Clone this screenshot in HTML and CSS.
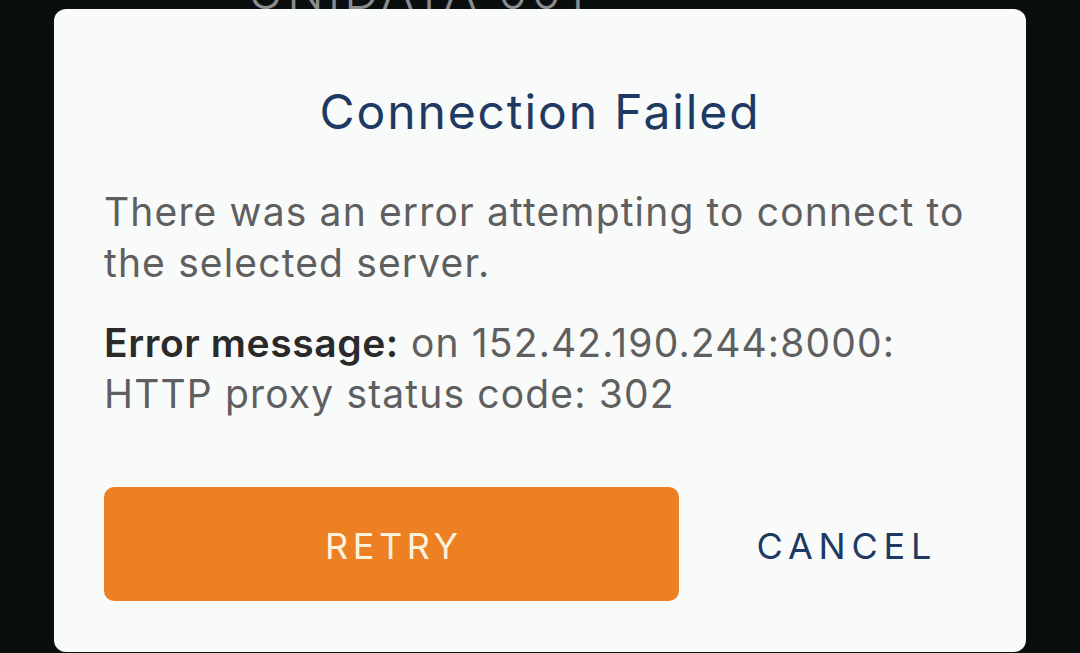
FILE: index.html
```html
<!DOCTYPE html>
<html>
<head>
<meta charset="utf-8">
<link rel="stylesheet" href="styles.css">
</head>
<body>
<div class="screen">
  <div class="bg-title">UNIDATA 001</div>
</div>
<div class="dialog">
  <h1 class="title">Connection Failed</h1>
  <p class="msg">There was an error attempting to connect to the selected server.</p>
  <p class="msg err"><b>Error message:</b> on 152.42.190.244:8000: HTTP proxy status code: 302</p>
  <div class="actions">
    <button class="btn retry">RETRY</button>
    <button class="btn cancel">CANCEL</button>
  </div>
</div>
</body>
</html>
```
FILE: styles.css
```css
html, body {
  margin: 0;
  padding: 0;
  width: 1080px;
  height: 653px;
  overflow: hidden;
  background: #0b0e0f;
  font-family: "Inter", "Noto Sans", sans-serif;
}
.screen {
  position: relative;
  height: 653px;
}
.bg-title {
  padding-left: 248px;
  margin-top: -38px;
  font-size: 48px;
  font-weight: 300;
  letter-spacing: 4px;
  color: #8a8d8f;
}
.dialog {
  position: absolute;
  left: 54px;
  top: 9px;
  width: 972px;
  height: 643px;
  box-sizing: border-box;
  background: #f9fafa;
  border-radius: 12px;
  padding: 75px 17px 0 50px;
}
.title {
  margin: 0 0 46px;
  padding-right: 33px;
  text-align: center;
  font-size: 48px;
  font-weight: 400;
  letter-spacing: 1.9px;
  line-height: 56px;
  color: #1e3a62;
}
.msg {
  margin: 0 0 29px;
  padding-right: 20px;
  font-size: 39px;
  line-height: 51px;
  letter-spacing: 1.15px;
  color: #5f5f5f;
}
.msg b {
  font-weight: 600;
  color: #2a2a2a;
  letter-spacing: 0.6px;
}
.err {
  margin-bottom: 68px;
}
.actions {
  display: flex;
  align-items: center;
}
.btn {
  border: none;
  font-family: inherit;
  font-size: 36px;
  cursor: pointer;
}
.retry {
  width: 575px;
  height: 114px;
  border-radius: 10px;
  background: #ec8023;
  color: #fdf2dc;
  letter-spacing: 4.5px;
  padding: 4px 0 0 4.5px;
}
.cancel {
  flex: 1;
  background: none;
  color: #1e3a62;
  height: 114px;
  text-align: center;
  letter-spacing: 5.8px;
  padding: 4px 0 0 5.8px;
}
```
